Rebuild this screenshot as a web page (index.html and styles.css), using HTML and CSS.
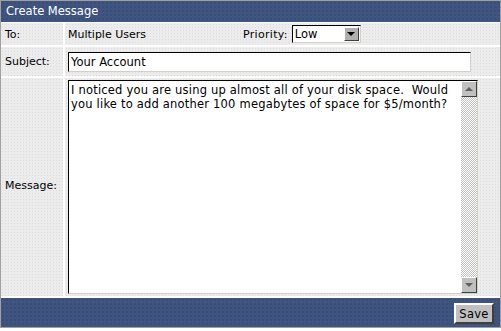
FILE: index.html
```html
<!DOCTYPE html>
<html lang="en">
<head>
  <meta charset="UTF-8">
  <title>Create Message</title>
  <link rel="stylesheet" href="styles.css">
</head>
<body>
  <div class="panel">
    <div class="title">Create Message</div>
    <div class="form">
      <div class="label">To:</div>
      <div class="value to-row">
        <span class="to-name">Multiple Users</span>
        <span class="prio-label">Priority:</span>
        <div class="select">
          <span class="select-text">Low</span>
          <span class="btn select-btn"><span class="arrow-down"></span></span>
        </div>
      </div>

      <div class="label">Subject:</div>
      <div class="value">
        <div class="field subject">Your Account</div>
      </div>

      <div class="label label-bottom">Message:</div>
      <div class="value">
        <div class="field message">
          <div class="message-text">I noticed you are using up almost all of your disk space.&nbsp; Would you like to add another 100 megabytes of space for $5/month?</div>
          <div class="scrollbar">
            <span class="btn scroll-btn"><span class="arrow-up"></span></span>
            <span class="track"></span>
            <span class="btn scroll-btn"><span class="arrow-down"></span></span>
          </div>
        </div>
      </div>
    </div>
    <div class="footer">
      <button class="btn save">Save</button>
    </div>
  </div>
</body>
</html>
```

FILE: styles.css
```css
body {
  margin: 0;
  background: #ffffff;
  font-family: "DejaVu Sans", Verdana, sans-serif;
  font-size: 11px;
  color: #000;
}
.panel {
  width: 499px;
  border: 1px solid #a0a0a0;
  background: #ffffff;
}
.title {
  height: 21px;
  line-height: 21px;
  padding-left: 5px;
  color: #ffffff;
  font-size: 11.5px;
  background-color: #3f5580;
  background-image: radial-gradient(#32466c 0.6px, transparent 0.8px);
  background-size: 4px 4px;
}
.form {
  display: grid;
  grid-template-columns: 62px 1fr;
  grid-template-rows: 22px 29px 218px;
  gap: 2px;
  padding: 1px 0 2px;
  background: #ffffff;
}
.label,
.value {
  display: flex;
  align-items: center;
  background-color: #ececec;
  background-image: radial-gradient(#dcdcdc 0.6px, transparent 0.8px);
  background-size: 3px 3px;
}
.label {
  padding-left: 4px;
}
.label-bottom {
  align-items: flex-end;
  padding-bottom: 104px;
}
.value {
  padding-left: 3px;
}
.to-name {
  width: 175px;
}
.prio-label {
  margin-right: 4px;
  letter-spacing: 0.3px;
}
.select {
  display: flex;
  align-items: center;
  width: 64px;
  height: 16px;
  border: 1px solid #000;
  border-right-color: #d4d0c8;
  border-bottom-color: #d4d0c8;
  background: #fff;
  padding: 0 1px 0 2px;
}
.select-text {
  flex: 1;
  font-size: 11.5px;
}
.btn {
  display: flex;
  align-items: center;
  justify-content: center;
  background: #c0c0c0;
  border: 1px solid;
  border-color: #ffffff #404040 #404040 #ffffff;
  box-sizing: border-box;
}
.select-btn {
  width: 15px;
  height: 14px;
  background: #b0b0b0;
}
.select-btn .arrow-down {
  border-top-color: #000;
}
.arrow-down,
.arrow-up {
  width: 0;
  height: 0;
  border-left: 4px solid transparent;
  border-right: 4px solid transparent;
}
.arrow-down {
  border-top: 4px solid #606060;
}
.arrow-up {
  border-bottom: 4px solid #606060;
}
.field {
  background: #ffffff;
  border: 1px solid;
  border-color: #000 #d4d0c8 #d4d0c8 #000;
}
.subject {
  width: 399px;
  height: 18px;
  line-height: 18px;
  padding-left: 2px;
  font-size: 11.5px;
}
.message {
  display: flex;
  width: 408px;
  height: 212px;
  align-self: center;
}
.message-text {
  flex: 1;
  padding: 2px 2px;
  font-size: 11.5px;
  line-height: 14px;
  letter-spacing: 0.2px;
}
.scrollbar {
  display: flex;
  flex-direction: column;
  width: 16px;
}
.scroll-btn {
  height: 16px;
}
.track {
  flex: 1;
  background-color: #ffffff;
  background-image: conic-gradient(#c0c0c0 25%, transparent 0 50%, #c0c0c0 0 75%, transparent 0);
  background-size: 2px 2px;
}
.footer {
  display: flex;
  justify-content: flex-end;
  align-items: center;
  height: 29px;
  padding-right: 6px;
  background-color: #3f5580;
  background-image: radial-gradient(#32466c 0.6px, transparent 0.8px);
  background-size: 4px 4px;
}
.save {
  width: 40px;
  height: 21px;
  margin-top: 2px;
  font-family: "DejaVu Sans", Verdana, sans-serif;
  font-size: 11.5px;
  letter-spacing: 0.3px;
  color: #000;
  padding: 0;
  border-width: 2px;
  border-color: #ffffff #404040 #404040 #ffffff;
}
```
